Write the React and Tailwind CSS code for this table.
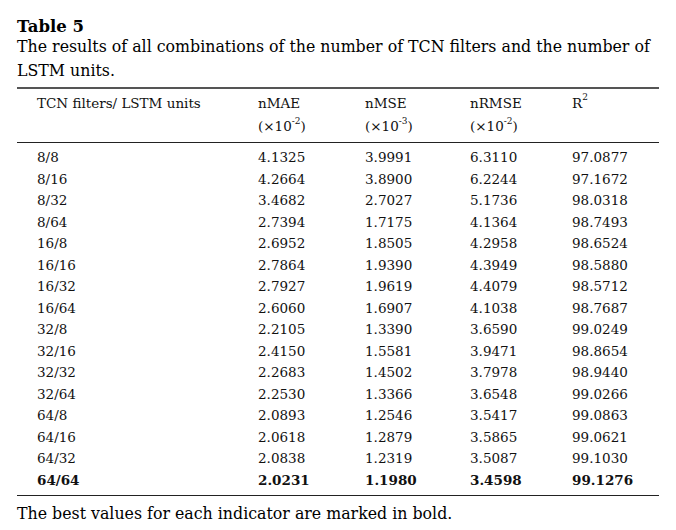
const rows = [
  ["8/8", "4.1325", "3.9991", "6.3110", "97.0877"],
  ["8/16", "4.2664", "3.8900", "6.2244", "97.1672"],
  ["8/32", "3.4682", "2.7027", "5.1736", "98.0318"],
  ["8/64", "2.7394", "1.7175", "4.1364", "98.7493"],
  ["16/8", "2.6952", "1.8505", "4.2958", "98.6524"],
  ["16/16", "2.7864", "1.9390", "4.3949", "98.5880"],
  ["16/32", "2.7927", "1.9619", "4.4079", "98.5712"],
  ["16/64", "2.6060", "1.6907", "4.1038", "98.7687"],
  ["32/8", "2.2105", "1.3390", "3.6590", "99.0249"],
  ["32/16", "2.4150", "1.5581", "3.9471", "98.8654"],
  ["32/32", "2.2683", "1.4502", "3.7978", "98.9440"],
  ["32/64", "2.2530", "1.3366", "3.6548", "99.0266"],
  ["64/8", "2.0893", "1.2546", "3.5417", "99.0863"],
  ["64/16", "2.0618", "1.2879", "3.5865", "99.0621"],
  ["64/32", "2.0838", "1.2319", "3.5087", "99.1030"],
];

const best = ["64/64", "2.0231", "1.1980", "3.4598", "99.1276"];

function Row({ cells, bold }) {
  return (
    <div className={`grid grid-cols-[221px_107px_105px_102px_1fr] h-[21.5px] items-center ${bold ? "font-bold" : ""}`}>
      {cells.map((c, i) => (
        <span key={i}>{c}</span>
      ))}
    </div>
  );
}

function Unit({ exp }) {
  return (
    <span>
      (×10<sup className="text-[9px] top-[-0.7em]">{exp}</sup>)
    </span>
  );
}

export default function App() {
  return (
    <div className="w-[676px] h-[530px] bg-white text-black px-[17px] pt-[19px] font-['DejaVu_Serif',serif]">
      {/* CAPTION */}
      <h1 className="text-[16.5px] font-bold leading-[16px]">Table 5</h1>
      <p className="text-[15.8px] leading-[24px] w-[647px]">
        The results of all combinations of the number of TCN filters and the number of LSTM units.
      </p>

      {/* TABLE */}
      <div className="mt-[4px] border-t-2 border-[#555] text-[13.5px] text-[#111]">
        <div className="grid grid-cols-[221px_107px_105px_102px_1fr] pl-[20px] pt-[2.5px] pb-[4px] leading-[23px] border-b border-[#222]">
          <span>TCN filters/ LSTM units</span>
          <div className="flex flex-col">
            <span>nMAE</span>
            <Unit exp="-2" />
          </div>
          <div className="flex flex-col">
            <span>nMSE</span>
            <Unit exp="-3" />
          </div>
          <div className="flex flex-col">
            <span>nRMSE</span>
            <Unit exp="-2" />
          </div>
          <span>
            R<sup className="text-[9px] top-[-0.8em]">2</sup>
          </span>
        </div>

        <div className="pl-[20px] pt-[4px] pb-[4px] border-b border-[#222]">
          {rows.map((r) => (
            <Row key={r[0]} cells={r} />
          ))}
          <Row cells={best} bold />
        </div>
      </div>

      <p className="text-[15.8px] leading-[25px] mt-[5.5px]">The best values for each indicator are marked in bold.</p>
    </div>
  );
}
